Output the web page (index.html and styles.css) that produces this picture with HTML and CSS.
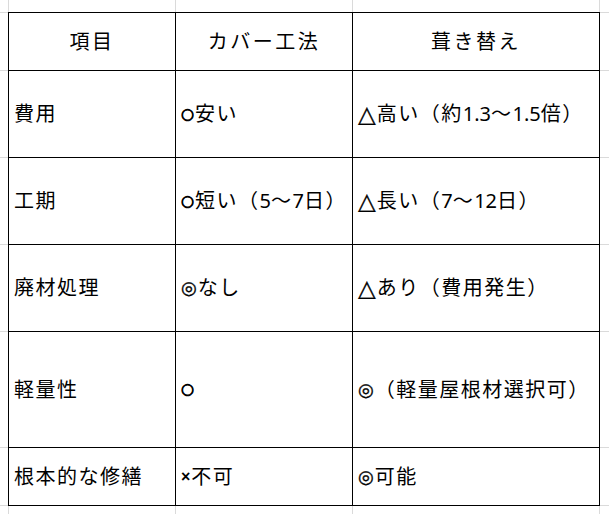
FILE: index.html
```html
<!DOCTYPE html>
<html lang="ja">
<head>
<meta charset="utf-8">
<title>カバー工法と葺き替えの比較</title>
<link rel="stylesheet" href="styles.css">
</head>
<body>
<div class="sheet">
  <div class="grid">
    <div class="cell head">項目</div>
    <div class="cell head">カバー工法</div>
    <div class="cell head">葺き替え</div>

    <div class="cell r87">費用</div>
    <div class="cell r87"><span class="m-o">○</span>安い</div>
    <div class="cell r87"><span class="m-tri">△</span>高い（約<span class="num">1.3</span>〜<span class="num">1.5</span>倍）</div>

    <div class="cell r87">工期</div>
    <div class="cell r87"><span class="m-o">○</span>短い（<span class="num">5</span>〜<span class="num">7</span>日）</div>
    <div class="cell r87"><span class="m-tri">△</span>長い（<span class="num">7</span>〜<span class="num">12</span>日）</div>

    <div class="cell r87">廃材処理</div>
    <div class="cell r87"><span class="m-dbl">◎</span>なし</div>
    <div class="cell r87"><span class="m-tri">△</span>あり（費用発生）</div>

    <div class="cell r116">軽量性</div>
    <div class="cell r116"><span class="m-o">○</span></div>
    <div class="cell r116"><span class="m-dbl">◎</span>（軽量屋根材選択可）</div>

    <div class="cell r58">根本的な修繕</div>
    <div class="cell r58"><span class="m-x">×</span>不可</div>
    <div class="cell r58"><span class="m-dbl">◎</span>可能</div>
  </div>
</div>
</body>
</html>
```
FILE: styles.css
```css
html, body {
  margin: 0;
  padding: 0;
  background: #ffffff;
}

.sheet {
  width: 609px;
  height: 514px;
  box-sizing: border-box;
  padding: 12px 0 0 8px;
  overflow: hidden;
  background:
    linear-gradient(#dadada, #dadada) 8px 0 / 1px 100% no-repeat,
    linear-gradient(#dadada, #dadada) 175px 0 / 1px 100% no-repeat,
    linear-gradient(#dadada, #dadada) 352px 0 / 1px 100% no-repeat,
    linear-gradient(#dadada, #dadada) 599px 0 / 1px 100% no-repeat,
    linear-gradient(#dadada, #dadada) 0 12px / 100% 1px no-repeat,
    linear-gradient(#dadada, #dadada) 0 70px / 100% 1px no-repeat,
    linear-gradient(#dadada, #dadada) 0 157px / 100% 1px no-repeat,
    linear-gradient(#dadada, #dadada) 0 244px / 100% 1px no-repeat,
    linear-gradient(#dadada, #dadada) 0 331px / 100% 1px no-repeat,
    linear-gradient(#dadada, #dadada) 0 447px / 100% 1px no-repeat,
    linear-gradient(#dadada, #dadada) 0 505px / 100% 1px no-repeat,
    #ffffff;
}

.grid {
  display: grid;
  grid-template-columns: 167px 177px 247px;
  grid-template-rows: 58px 87px 87px 87px 116px 58px;
  width: 592px;
  box-sizing: border-box;
  border-left: 1px solid #000;
  border-top: 1px solid #000;
  background: #ffffff;
  font-family: "Noto Sans", "Noto Sans CJK JP", sans-serif;
  font-size: 20px;
  color: #000;
}

.cell {
  box-sizing: border-box;
  border-right: 1px solid #000;
  border-bottom: 1px solid #000;
  display: flex;
  align-items: center;
  padding-left: 5px;
  letter-spacing: 1.5px;
  white-space: nowrap;
  line-height: 1;
}

.head {
  justify-content: center;
  padding-left: 0;
  letter-spacing: 2.5px;
}

.num {
  font-family: "Noto Sans", sans-serif;
  letter-spacing: 0;
}

.m-o {
  font-family: "DejaVu Sans", sans-serif;
  font-weight: bold;
  font-size: 15px;
  -webkit-text-stroke: 0.8px #000;
  letter-spacing: 0;
  margin-right: 1px;
}

.m-dbl {
  font-family: "DejaVu Sans", sans-serif;
  font-size: 18px;
  -webkit-text-stroke: 0.4px #000;
  letter-spacing: 0;
  margin-right: 1px;
}

.m-tri {
  font-family: "DejaVu Sans", sans-serif;
  font-size: 23px;
  -webkit-text-stroke: 0.3px #000;
  letter-spacing: 0;
  margin-right: 1px;
}

.m-x {
  font-family: "Liberation Sans", sans-serif;
  font-weight: bold;
  font-size: 16px;
  letter-spacing: 0;
  margin-right: 1px;
}
```
